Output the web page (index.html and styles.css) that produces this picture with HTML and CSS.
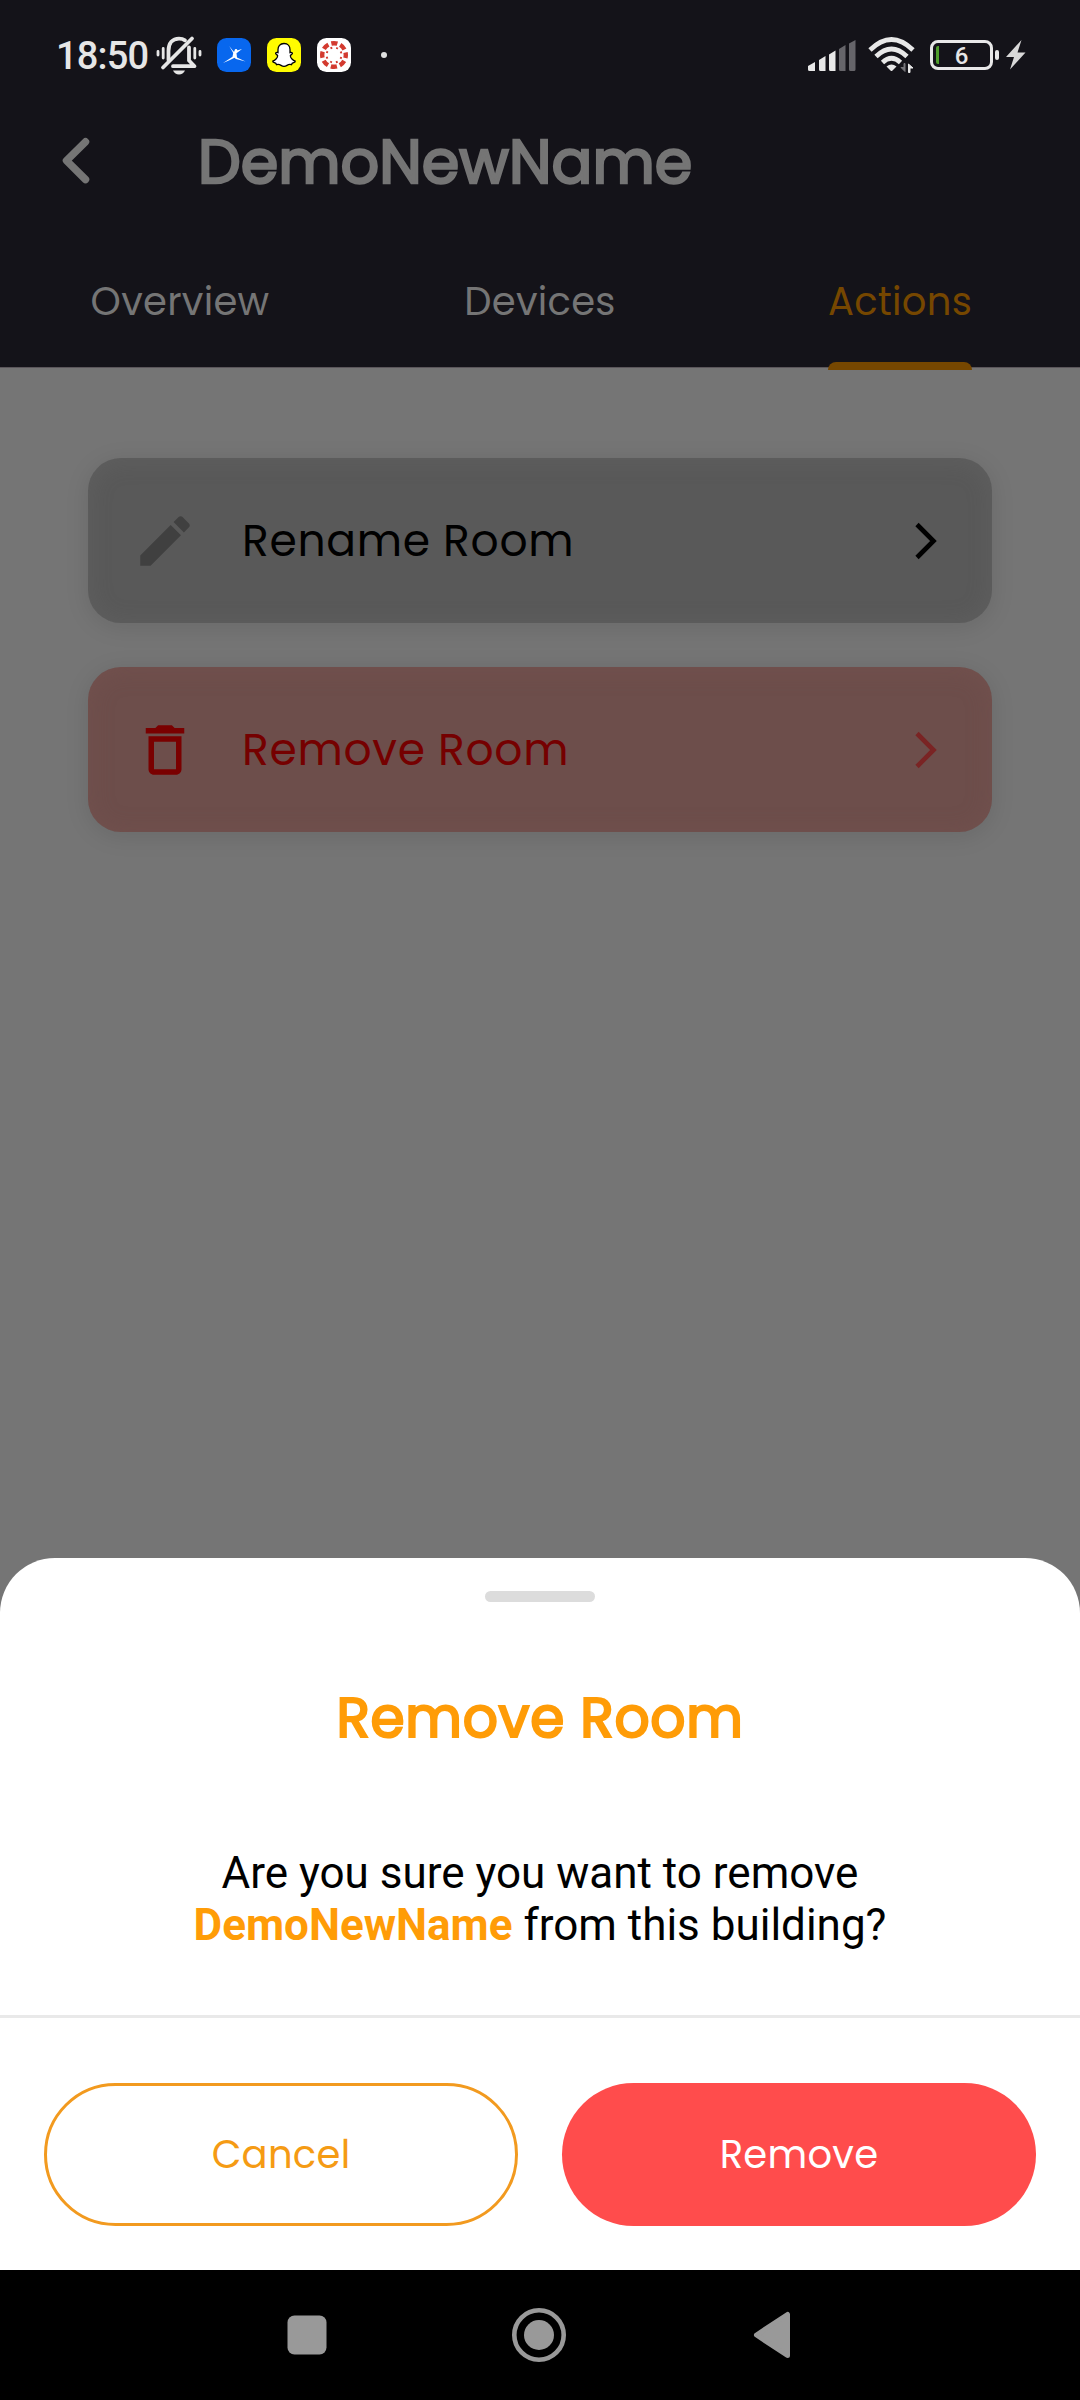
FILE: index.html
```html
<!DOCTYPE html>
<html lang="en">
<head>
<meta charset="utf-8">
<title>DemoNewName</title>
<link rel="stylesheet" href="styles.css">
</head>
<body>
<div class="screen">
  <header class="header">
    <div class="status">
      <span class="clock">18:50</span>
      <svg class="bell" width="46" height="40" viewBox="0 0 46 40" fill="none" stroke="#e6e6e6" stroke-width="3.8" stroke-linecap="round" stroke-linejoin="round">
        <path d="M12.500 25V16C12.500 8 16.500 3.700 23 3.700C25.500 3.700 27.500 4.300 29 5.300M33 12.500V25.500L38.500 31.200H17"/>
        <path d="M7 32.500L36 3.500"/>
        <path d="M17 35.500H29Q27 39.500 23 39.500T17 35.500Z" fill="#e6e6e6" stroke="none"/>
        <path d="M2 16.500V20M7.200 13.500V23M38.800 13.500V23M44 16.500V20" stroke-width="2.800"/>
      </svg>
      <svg class="app" width="34" height="34" viewBox="0 0 34 34">
        <rect width="34" height="34" rx="9.500" fill="#0867ee"/>
        <path d="M12.200 8L16.500 13.500L25 11L19.500 15.200L20 19.500L28.500 23.500L19 21L17.500 19.800L13 22L6 25L15.500 18.800L16.200 15Z" fill="#fff"/>
        <circle cx="19" cy="12.200" r="1.300" fill="#fff"/>
      </svg>
      <svg class="app" width="34" height="34" viewBox="0 0 34 34">
        <rect width="34" height="34" rx="9.500" fill="#fffc00"/>
        <path d="M17 5.500C12.800 5.500 11 8.600 11 11.500V14.600C9.800 14.200 8.500 14.500 8.600 15.500C8.700 16.600 10.500 16.700 10.700 17.800C10.600 20 8 22.500 5.700 23.200C5.400 24.500 8.200 24.900 8.800 25.300L9.500 26.700C11.300 26.200 12.700 26.500 14 27.400Q17 29.400 20 27.400C21.300 26.500 22.700 26.200 24.500 26.700L25.200 25.300C25.800 24.900 28.600 24.500 28.300 23.200C26 22.500 23.400 20 23.300 17.800C23.500 16.700 25.300 16.600 25.400 15.500C25.500 14.500 24.200 14.200 23 14.600V11.500C23 8.600 21.200 5.500 17 5.500Z" fill="#fff" stroke="#000" stroke-width="1.300"/>
      </svg>
      <svg class="app" width="34" height="34" viewBox="0 0 34 34">
        <rect width="34" height="34" rx="9.500" fill="#fff"/>
        <circle cx="17" cy="17" r="11.800" fill="none" stroke="#d33a2f" stroke-width="4.400" stroke-dasharray="6.200 3.067" stroke-dashoffset="3.100"/>
        <circle cx="17" cy="17" r="7.500" fill="none" stroke="#d33a2f" stroke-width="1.900" stroke-dasharray="1.900 3.990" stroke-dashoffset="-2"/>
      </svg>
      <span class="more-dot"></span>
      <svg class="signal" width="48" height="32" viewBox="0 -1 48 32">
        <path d="M0 26L7 22V31H1.500Q0 31 0 29.500ZM11 20L17.500 16V31H12.500Q11 31 11 29.500ZM21 14.500L27.500 10.500V31H22.500Q21 31 21 29.500Z" fill="#e8e8e8"/>
        <path d="M31 9L37.500 5V31H32.500Q31 31 31 29.500ZM41 3.500L47.500 0V29.500Q47.500 31 46 31H42.500Q41 31 41 29.500Z" fill="#66656a"/>
      </svg>
      <svg class="wifi" width="48" height="36" viewBox="0 0 48 36" fill="none">
        <path d="M2 13Q23.500-8 45 13M8 19.500Q23.500 4.500 39 19.500M14.500 25.500Q23.500 17 32.500 25.500" stroke="#e8e8e8" stroke-width="4.700"/>
        <path d="M18.500 29.500Q23.500 25.500 28.500 29.500L24.500 33.500Q23.500 34.500 22.500 33.500Z" fill="#e8e8e8"/>
        <path d="M37 26.500V34.500L33 30.500H36V26.500Z" fill="#77767b" stroke="#77767b"/>
        <path d="M40.500 35.500V27L45 31H42V35.500Z" fill="#e8e8e8" stroke="#e8e8e8"/>
      </svg>
      <div class="battery"><span class="battery-level">6</span></div>
      <svg class="bolt" width="20" height="30" viewBox="0 0 20 30"><path d="M15.500 0L0 17H8L4 29.500L19.500 12.500H11.500Z" fill="#d8d8d8"/></svg>
    </div>
    <div class="titlebar">
      <svg class="back" width="30" height="50" viewBox="0 0 30 50" fill="none" stroke="#757575" stroke-width="7.500" stroke-linecap="round" stroke-linejoin="round"><path d="M24.500 4.800L5.500 23.600L24.500 42.500"/></svg>
      <h1 class="title">DemoNewName</h1>
    </div>
    <nav class="tabs">
      <div class="tab">Overview</div>
      <div class="tab">Devices</div>
      <div class="tab active">Actions</div>
    </nav>
  </header>
  <main class="content">
    <div class="card rename">
      <svg class="card-icon" width="66" height="66" viewBox="0 0 24 24"><path fill="#404040" d="M20.710 7.040c.390-.390.390-1.040 0-1.410l-2.340-2.340c-.370-.390-1.020-.390-1.410 0l-1.840 1.830 3.750 3.750M3 17.250V21h3.750L17.810 9.930l-3.750-3.750L3 17.250z"/></svg>
      <span class="card-label">Rename Room</span>
      <svg class="chevron" width="22" height="38" viewBox="0 0 22 38" fill="none" stroke="#000" stroke-width="4.600"><path d="M2 2.500L18.500 19L2 35.500"/></svg>
    </div>
    <div class="card remove">
      <svg class="card-icon" width="66" height="66" viewBox="0 0 24 24"><path fill="#7a0000" d="M6 19c0 1.100.900 2 2 2h8c1.100 0 2-.900 2-2V7H6v12zM8 9h8v10H8V9zm7.500-5l-1-1h-5l-1 1H5v2h14V4z"/></svg>
      <span class="card-label">Remove Room</span>
      <svg class="chevron" width="22" height="38" viewBox="0 0 22 38" fill="none" stroke="#7a2424" stroke-width="4.600"><path d="M2 2.500L18.500 19L2 35.500"/></svg>
    </div>
  </main>
  <section class="sheet">
    <div class="handle"></div>
    <h2 class="sheet-title">Remove Room</h2>
    <p class="message">Are you sure you want to remove<br><b>DemoNewName</b> from this building?</p>
    <div class="buttons">
      <button class="btn cancel">Cancel</button>
      <button class="btn confirm">Remove</button>
    </div>
  </section>
  <footer class="navbar">
    <svg width="40" height="56" viewBox="0 0 40 56"><rect x=".5" y="8.500" width="39" height="39" rx="7" fill="#999"/></svg>
    <svg width="56" height="56" viewBox="0 0 56 56"><circle cx="28" cy="28" r="24.700" fill="none" stroke="#999" stroke-width="4.600"/><circle cx="28" cy="28" r="15" fill="#999"/></svg>
    <svg width="40" height="56" viewBox="0 0 40 56"><path d="M3.500 28L34.500 7.500V48.500Z" fill="#999" stroke="#999" stroke-width="5" stroke-linejoin="round"/></svg>
  </footer>
</div>
</body>
</html>
```
FILE: styles.css
```css
* { box-sizing: border-box; }
body { margin: 0; background: #757575; }
svg { display: block; flex: none; }

.screen {
  width: 1080px;
  height: 2400px;
  display: flex;
  flex-direction: column;
  overflow: hidden;
  background: #757575;
  font-family: Poppins, Inter, sans-serif;
}

/* Header */
.header { height: 368px; background: #141319; border-bottom: 1px solid #5b565b; flex: none; }
.status { height: 110px; display: flex; align-items: center; padding-left: 56px; color: #e6e6e6; }
.clock { width: 100px; font: 500 38px/44px Roboto, sans-serif; letter-spacing: -0.8px; padding-top: 2px; }
.bell { margin-right: 15px; }
.app { margin-right: 16px; }
.more-dot { width: 6px; height: 6px; margin-left: 14px; border-radius: 50%; background: #e0e0e0; }
.signal { margin-left: 421px; }
.wifi { margin-left: 12px; }
.battery {
  position: relative;
  width: 63px;
  height: 30px;
  margin-left: 14px;
  border: 3px solid #e8e8e8;
  border-radius: 8px;
}
.battery::before { content: ""; position: absolute; left: 3px; top: 3px; width: 3px; height: 18px; border-radius: 2px 0 0 2px; background: #4f9e2c; }
.battery::after { content: ""; position: absolute; left: 62px; top: 7px; width: 4px; height: 10px; border-radius: 2px; background: #e8e8e8; }
.battery-level { display: block; font: 500 24px/26px Roboto, sans-serif; text-align: center; }
.bolt { margin-left: 13px; }

.titlebar { height: 104px; display: flex; align-items: center; padding-left: 61px; }
.title { margin: 0 0 0 107px; font-size: 60.5px; line-height: 76px; font-weight: 400; -webkit-text-stroke: 2.4px #757575; color: #757575; }
.tabs { display: grid; grid-template-columns: repeat(3, 1fr); height: 156px; }
.tab { display: flex; flex-direction: column; align-items: center; padding-top: 64px; font-size: 38.5px; line-height: 48px; letter-spacing: .275px; color: #757575; }
.active { color: #764700; }
.active::after { content: ""; width: 144px; height: 8px; margin-top: 36px; border-radius: 8px 8px 0 0; background: #764700; flex: none; position: relative; }

/* Action cards */
.content { height: 1190px; flex: none; display: flex; flex-direction: column; gap: 44px; padding: 90px 88px 0; }
.card {
  height: 165px;
  display: flex;
  align-items: center;
  padding: 0 55px 0 44px;
  border-radius: 33px;
  font-size: 44px;
  line-height: 52px;
  letter-spacing: .69px;
}
.rename { background: #595959; color: #000; box-shadow: 0 4px 24px rgba(0, 0, 0, .1), inset 0 2px 24px rgba(117, 117, 117, .24); }
.remove { background: #6d4e4b; color: #750000; box-shadow: 0 4px 24px rgba(0, 0, 0, .1), inset 0 2px 24px rgba(125, 88, 85, .34); }
.card-label { flex: 1; margin-left: 44px; }

/* Bottom sheet */
.sheet { height: 712px; flex: none; display: flex; flex-direction: column; align-items: center; background: #fff; border-radius: 55px 55px 0 0; }
.handle { width: 110px; height: 11px; margin-top: 33px; border-radius: 6px; background: #dcdcdc; }
.sheet-title { margin: 82px 0 0; font-size: 55px; line-height: 68px; letter-spacing: .69px; font-weight: 400; -webkit-text-stroke: 2.2px #ff9c07; color: #ff9c07; }
.message { margin: 95px 0 0; text-align: center; font: 44px/52px Roboto, sans-serif; color: #000; }
.message b { color: #ff9c07; }
.buttons { width: 100%; margin-top: 64px; border-top: 3px solid #e9e9e9; padding: 65px 44px 0; display: grid; grid-template-columns: 1fr 1fr; gap: 44px; }
.btn { height: 143px; border: 0; padding: 0; border-radius: 72px; font: inherit; font-size: 38.5px; line-height: 48px; letter-spacing: .275px; }
.cancel { background: #fff; border: 3px solid #f29a1f; color: #f59b14; }
.confirm { background: #ff4c4c; color: #fff; }

/* System navigation */
.navbar { flex: 1; display: flex; align-items: center; padding-left: 287px; background: #000; }
.navbar svg:nth-child(2) { margin-left: 184px; }
.navbar svg:nth-child(3) { margin-left: 186px; }
```
